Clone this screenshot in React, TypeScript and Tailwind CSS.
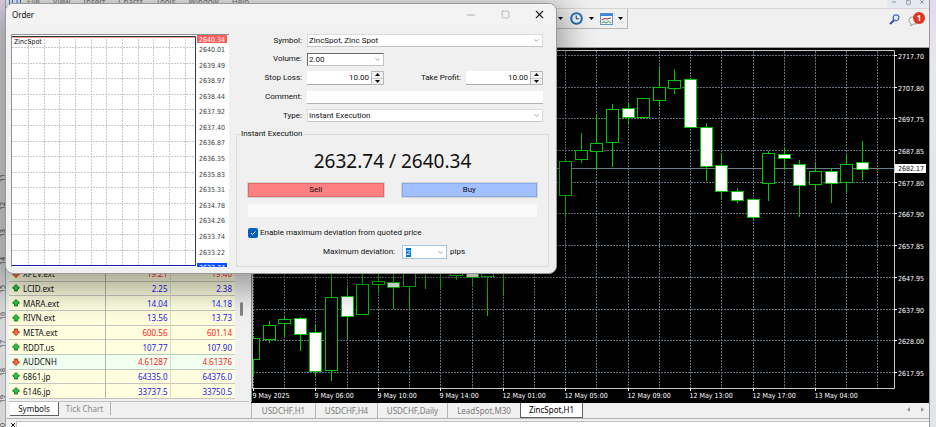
import React, { useState } from 'react';
import { ChevronDown, Minus, Square, X } from 'lucide-react';

type Quote = { symbol: string; bid: string; ask: string; up: boolean; alt?: boolean };

const quotes: Quote[] = [
  { symbol: 'XPEV.ext', bid: '19.21', ask: '19.40', up: false },
  { symbol: 'LCID.ext', bid: '2.25', ask: '2.38', up: true },
  { symbol: 'MARA.ext', bid: '14.04', ask: '14.18', up: true },
  { symbol: 'RIVN.ext', bid: '13.56', ask: '13.73', up: true },
  { symbol: 'META.ext', bid: '600.56', ask: '601.14', up: false },
  { symbol: 'RDDT.us', bid: '107.77', ask: '107.90', up: true },
  { symbol: 'AUDCNH', bid: '4.61287', ask: '4.61376', up: false, alt: true },
  { symbol: '6861.jp', bid: '64335.0', ask: '64376.0', up: true },
  { symbol: '6146.jp', bid: '33737.5', ask: '33750.5', up: true },
];

// [slot, high, body top, body bottom, low, bearish]
const candles: [number, number, number, number, number, boolean][] = [
  [0, 288, 290, 311, 328, false],
  [1, 273, 277, 291, 295, false],
  [2, 268, 271, 275, 289, false],
  [3, 269, 270, 286, 303, true],
  [4, 276, 284, 323, 328, true],
  [5, 220, 249, 322, 333, false],
  [6, 239, 248, 268, 291, true],
  [7, 220, 236, 266, 267, false],
  [8, 220, 233, 236, 245, false],
  [9, 220, 234, 239, 261, true],
  [10, 205, 212, 238, 261, false],
  [11, 200, 208, 220, 241, false],
  [12, 196, 204, 216, 240, false],
  [13, 200, 206, 227, 232, false],
  [14, 200, 206, 229, 239, true],
  [15, 200, 210, 228, 268, false],
  [16, 190, 198, 214, 248, false],
  [17, 176, 184, 198, 208, false],
  [18, 164, 170, 184, 196, false],
  [19, 140, 146, 170, 180, false],
  [20, 111, 113, 147, 168, false],
  [21, 85, 102, 111, 115, false],
  [22, 67, 95, 103, 122, false],
  [23, 56, 61, 94, 119, false],
  [24, 55, 60, 69, 76, true],
  [25, 50, 50, 69, 71, false],
  [26, 19, 39, 52, 58, false],
  [27, 21, 32, 40, 46, false],
  [28, 30, 31, 79, 79, true],
  [29, 75, 79, 118, 133, true],
  [30, 105, 117, 143, 151, true],
  [31, 140, 143, 152, 155, true],
  [32, 151, 151, 169, 171, true],
  [33, 103, 105, 135, 153, false],
  [34, 99, 106, 110, 122, true],
  [35, 112, 116, 137, 169, true],
  [36, 115, 123, 136, 142, false],
  [37, 120, 123, 135, 155, true],
  [38, 107, 116, 134, 144, false],
  [39, 93, 114, 121, 132, true],
];

const prices = ['2717.70', '2707.80', '2697.75', '2687.85', '2677.80', '2667.90', '2657.85', '2647.95', '2637.90', '2628.00', '2617.95'];
const times = ['9 May 2025', '9 May 06:00', '9 May 10:00', '9 May 14:00', '12 May 01:00', '12 May 05:00', '12 May 09:00', '12 May 13:00', '12 May 17:00', '13 May 04:00'];
const tickPrices = ['2640.01', '2639.49', '2638.97', '2638.44', '2637.92', '2637.40', '2636.87', '2636.35', '2635.83', '2635.31', '2634.78', '2634.26', '2633.74', '2633.22'];

const range = (n: number) => Array.from({ length: n }, (_, i) => i);

function PriceChart() {
  const gridX = (i: number) => Math.round(2 + i * 31.22) + 0.5;
  const gridY = (i: number) => Math.round(7 + i * 31.69) + 0.5;

  return (
    <svg className="block h-full w-full bg-black font-['DejaVu_Sans_Condensed','Noto_Sans',sans-serif] text-[7px]" role="img" aria-label="ZincSpot H1 chart">
      <g stroke="#66727f" strokeDasharray="2 1" shapeRendering="crispEdges">
        {range(21).map((i) => <line key={i} x1={gridX(i)} x2={gridX(i)} y1="3" y2="340" />)}
        {range(11).map((i) => <line key={i} x1="2" x2="643" y1={gridY(i)} y2={gridY(i)} />)}
      </g>
      <path d="M0 120.5H643" stroke="#6d7a88" />
      <g stroke="#00c800" shapeRendering="crispEdges">
        {candles.map(([slot, high, top, bottom, low, bearish]) => {
          const x = Math.round(2 + slot * 15.61);
          return (
            <g key={slot}>
              <line x1={x + 0.5} x2={x + 0.5} y1={high} y2={low} />
              <rect x={x - 5.5} y={top + 0.5} width="12" height={Math.max(bottom - top, 1)} fill={bearish ? '#fff' : '#000'} />
            </g>
          );
        })}
      </g>
      <rect x="0" y="0" width="1" height="354" fill="#8a8a8a" />
      <path d="M1.5 2.5H643.5V340.5H1.5Z" fill="none" stroke="#c8c8c8" />
      <g fill="#fff">
        {prices.map((p, i) => (
          <g key={p}>
            <rect x="643" y={gridY(i) - 0.5} width="3" height="1" />
            <text x="647" y={gridY(i) + 3}>{p}</text>
          </g>
        ))}
        {times.map((t, i) => (
          <g key={t}>
            <rect x={gridX(i * 2) - 0.5} y="340" width="1" height="3" />
            <text x={gridX(i * 2) - 1} y="350">{t}</text>
          </g>
        ))}
      </g>
      <rect x="644" y="116" width="31" height="9" fill="#fff" />
      <text x="647" y="123" fill="#111">2682.17</text>
    </svg>
  );
}

function TickChart() {
  return (
    <svg className="block h-[233px] w-[218px] shrink-0 bg-white font-['DejaVu_Sans_Condensed','Noto_Sans',sans-serif] text-[7px]" role="img" aria-label="ZincSpot tick chart">
      <g stroke="#c9c9c9" strokeDasharray="2 1" shapeRendering="crispEdges">
        {range(11).map((i) => {
          const x = Math.round(17 + i * 15.67) + 0.5;
          return <line key={i} x1={x} x2={x} y1="2" y2="231" />;
        })}
        {tickPrices.map((p, i) => {
          const y = Math.round(13 + i * 15.6) + 0.5;
          return <line key={p} x1="1" x2="185" y1={y} y2={y} />;
        })}
      </g>
      <path d="M1 3.5H185" stroke="#ff9c9c" />
      <path d="M0.5 233V0.5H218" fill="none" stroke="#8e9494" />
      <path d="M1 2.5H184.5V232" fill="none" stroke="#333b3b" />
      <path d="M1 231.5H185" stroke="#1a1ab4" />
      <text x="3" y="10" fill="#111">ZincSpot</text>
      <g fill="#3a3f42">
        {tickPrices.map((p, i) => <text key={p} x="188" y={Math.round(18 + i * 15.58)}>{p}</text>)}
      </g>
      <rect x="186" y="1" width="30" height="8" fill="#ff5a5a" />
      <text x="188" y="8" fill="#fff">2640.34</text>
      <rect x="186" y="229" width="30" height="4" fill="#0a50ff" />
      <text x="188" y="236" fill="#fff">2632.74</text>
    </svg>
  );
}

function Dropdown({ id, value, className = '', dark = false }: { id: string; value: string; className?: string; dark?: boolean }) {
  return (
    <div className={`relative h-[13px] ${className}`}>
      <select
        id={id}
        defaultValue={value}
        className={`block h-full w-full appearance-none border bg-white px-px outline-none ${dark ? 'border-[#c4c4c4] border-l-[#6a6a6a] border-t-[#6a6a6a]' : 'border-[#dcdcdc] border-b-[#c8c8c8]'}`}
      >
        <option>{value}</option>
      </select>
      <ChevronDown className="pointer-events-none absolute right-[3px] top-[3px] size-[7px] text-[#666]" />
    </div>
  );
}

function Spinner({ id, value }: { id: string; value: string }) {
  return (
    <div className="flex h-[14px] w-[77px]">
      <input id={id} defaultValue={value} className="w-0 flex-1 border-b border-[#a8a8a8] bg-white pr-0.5 text-right outline-none" />
      <div className="flex w-[13px] flex-col border border-[#b8b8b8] bg-[#f3f3f3]">
        <button type="button" aria-label="Increase" className="flex flex-1 items-center justify-center border-b border-[#c8c8c8]">
          <svg width="5" height="3" viewBox="0 0 5 3"><path d="M2.5 0L5 3H0Z" /></svg>
        </button>
        <button type="button" aria-label="Decrease" className="flex flex-1 items-center justify-center">
          <svg width="5" height="3" viewBox="0 0 5 3"><path d="M0 0H5L2.5 3Z" /></svg>
        </button>
      </div>
    </div>
  );
}

function Label({ htmlFor, children }: { htmlFor: string; children: React.ReactNode }) {
  return <label htmlFor={htmlFor} className="mr-[5px] w-[66px] shrink-0 text-right">{children}</label>;
}

function OrderDialog() {
  const [deviation, setDeviation] = useState(true);

  return (
    <div
      role="dialog"
      aria-label="Order"
      className="absolute left-[5px] top-[3px] w-[552px] overflow-hidden rounded-lg border border-[#9a9a9a] bg-[#f0f0f0] pb-1.5 shadow-[0_8px_32px_8px_rgba(0,0,0,0.35)]"
    >
      <div className="flex h-[21px] items-center bg-[#f3f3f3] pl-1.5">
        <h1 className="flex-1 text-[8px]">Order</h1>
        <button type="button" aria-label="Minimize" className="flex w-[34px] justify-center text-[#999]"><Minus className="size-[12px]" strokeWidth={1.5} /></button>
        <button type="button" aria-label="Maximize" className="flex w-[34px] justify-center text-[#aaa]"><Square className="size-[9px]" /></button>
        <button type="button" aria-label="Close" className="flex w-[34px] justify-center text-[#222]"><X className="size-[13px]" strokeWidth={2} /></button>
      </div>

      <div className="flex gap-[7px] pl-[5px] pr-[7px] pt-[9px] font-[Roboto,sans-serif]">
        <TickChart />
        <form className="flex-1" onSubmit={(e) => e.preventDefault()}>
          <div className="flex h-[88px] flex-col justify-between pr-1.5">
            <div className="flex items-center">
              <Label htmlFor="symbol">Symbol:</Label>
              <Dropdown id="symbol" value="ZincSpot, Zinc Spot" className="flex-1" />
            </div>
            <div className="flex items-center">
              <Label htmlFor="volume">Volume:</Label>
              <Dropdown id="volume" value="2.00" className="w-[77px]" dark />
            </div>
            <div className="flex items-center">
              <Label htmlFor="stop-loss">Stop Loss:</Label>
              <Spinner id="stop-loss" value="10.00" />
              <label htmlFor="take-profit" className="ml-auto mr-[5px]">Take Profit:</label>
              <Spinner id="take-profit" value="10.00" />
            </div>
            <div className="flex items-center">
              <Label htmlFor="comment">Comment:</Label>
              <input id="comment" className="h-[13px] w-0 flex-1 border-b border-[#b0b0b0] bg-white px-1 outline-none" />
            </div>
            <div className="flex items-center">
              <Label htmlFor="type">Type:</Label>
              <Dropdown id="type" value="Instant Execution" className="flex-1" />
            </div>
          </div>

          <fieldset className="mt-1.5 h-[139px] border border-[#dcdcdc] px-[11px]">
            <legend className="-ml-2 px-px leading-[12px]">Instant Execution</legend>
            <p className="mt-[9px] text-center font-['Noto_Sans',sans-serif] text-[19px] leading-6">2632.74 / 2640.34</p>
            <div className="mt-[10px] flex gap-[18px]">
              <button type="button" className="h-[14px] flex-1 border border-[#e06868] bg-[#ff8080] outline-1 outline-[#d4d4d4]">Sell</button>
              <button type="button" className="h-[14px] flex-1 border border-[#86a6ea] bg-[#a0c0ff] outline-1 outline-[#d4d4d4]">Buy</button>
            </div>
            <div className="mt-[7px] h-[13px] bg-[#f9f9f9]" />
            <label className="mt-[10px] flex items-center gap-0.5">
              <input type="checkbox" checked={deviation} onChange={(e) => setDeviation(e.target.checked)} className="peer sr-only" />
              <span className="flex size-[10px] items-center justify-center rounded-xs bg-[#005fb8]">
                {deviation && <svg width="6" height="6" viewBox="0 0 6 6" fill="none" stroke="#fff"><path d="M1 3L2.5 4.5L5.5 1.5" /></svg>}
              </span>
              Enable maximum deviation from quoted price
            </label>
            <div className="mt-1.5 flex items-center">
              <label htmlFor="max-deviation" className="mr-[7px] w-[147px] text-right">Maximum deviation:</label>
              <div className="relative h-[14px] w-[45px]">
                <input
                  id="max-deviation"
                  defaultValue="2"
                  autoFocus
                  onFocus={(e) => e.target.select()}
                  className="block h-full w-full border border-[#a8c4e4] bg-white px-[3px] outline-none selection:bg-[#0078d7] selection:text-white"
                />
                <ChevronDown className="pointer-events-none absolute right-[3px] top-[4px] size-[7px] text-[#555]" />
              </div>
              <span className="ml-[3px]">pips</span>
            </div>
          </fieldset>
        </form>
      </div>
    </div>
  );
}

function Arrow({ up }: { up: boolean }) {
  return (
    <svg width="8" height="8" viewBox="0 0 8 8" className="shrink-0">
      {up
        ? <path d="M4 0.5L7.5 4L5.5 5V7H2.5V5L0.5 4Z" fill="#30c040" stroke="#17802a" />
        : <path d="M4 7.5L0.5 4L2.5 3V1H5.5V3L7.5 4Z" fill="#f06a3c" stroke="#b53c18" />}
    </svg>
  );
}

function MarketWatch() {
  return (
    <section className="flex w-[243px] shrink-0 flex-col pl-[3px]">
      <div className="flex flex-1 items-end overflow-hidden pb-0.5">
        <table className="h-[132px] w-[226px] table-fixed border-collapse bg-[#ffffe0]">
          <tbody>
            {quotes.map((q) => (
              <tr key={q.symbol} className={`border-b border-[#c6c6c0] ${q.alt ? 'bg-[#f0fff0]' : ''}`}>
                <td className="w-[96px] border-r border-[#b4b4b0] p-0 pl-[3px]">
                  <span className="flex items-center gap-[3px] leading-[13px]"><Arrow up={q.up} />{q.symbol}</span>
                </td>
                <td className={`border-r border-[#dcdcc8] p-0 pr-0.5 text-right leading-[13px] ${q.up ? 'text-[#2020f0]' : 'text-[#ff2020]'}`}>{q.bid}</td>
                <td className={`p-0 pr-[3px] text-right leading-[13px] ${q.up ? 'text-[#2020f0]' : 'text-[#ff2020]'}`}>{q.ask}</td>
              </tr>
            ))}
          </tbody>
        </table>
        <div className="flex h-[132px] w-[12px] justify-center pt-[35px]">
          <div className="h-[14px] w-[3px] rounded-full bg-[#858585]" />
        </div>
      </div>
      <div className="flex h-[17px] items-start border-t border-[#c0c0c0]">
        <button type="button" className="ml-px h-[14px] w-[49px] border-b border-r border-[#606060] bg-white">Symbols</button>
        <button type="button" className="h-[13px] w-[52px] border-r border-[#b0b0b0] text-[#888]">Tick Chart</button>
      </div>
    </section>
  );
}

function ChartTabs() {
  return (
    <nav className="flex h-[15px] items-start bg-[#f0f0f0] text-[#7a7a7a]">
      <button type="button" className="h-[15px] w-[65px] border-x border-[#b4b4b4]">USDCHF,H1</button>
      <button type="button" className="h-[15px] w-[62px] border-r border-[#b4b4b4]">USDCHF,H4</button>
      <button type="button" className="h-[15px] w-[70px] border-r border-[#b4b4b4]">USDCHF,Daily</button>
      <button type="button" className="h-[15px] w-[72px]">LeadSpot,M30</button>
      <button type="button" className="h-[15px] w-[63px] border-x border-b border-[#606060] bg-white text-black">ZincSpot,H1</button>
      <span className="ml-auto mr-1 flex h-[13px] items-center gap-[10px]">
        <button type="button" aria-label="Scroll left"><svg width="4" height="5" viewBox="0 0 4 5" fill="#999"><path d="M3 0V5L0 2.5Z" /></svg></button>
        <button type="button" aria-label="Scroll right"><svg width="4" height="5" viewBox="0 0 4 5" fill="#999"><path d="M0 0V5L3 2.5Z" /></svg></button>
      </span>
    </nav>
  );
}

function Caret() {
  return <svg width="5" height="3" viewBox="0 0 5 3"><path d="M0 0H5L2.5 3Z" /></svg>;
}

function Toolbar() {
  return (
    <div className="flex h-[39px] items-start justify-between border-b border-[#a0a0a0]">
      <div className="flex h-[20px] w-[622px] items-center justify-end border-b border-r border-[#b8b8b8] pr-1">
        <Caret />
        <button type="button" aria-label="Periods" className="ml-[7px] flex items-center gap-[6px]">
          <svg width="13" height="13" viewBox="0 0 13 13">
            <circle cx="6.5" cy="6.5" r="6.2" fill="#1858a8" />
            <circle cx="6.5" cy="6.5" r="5" fill="#58a8ec" />
            <circle cx="6.5" cy="6.5" r="3.9" fill="#eef6fc" />
            <path d="M6.2 3.5V6.8H8.8" fill="none" stroke="#234" />
          </svg>
          <Caret />
        </button>
        <button type="button" aria-label="Templates" className="ml-[6px] flex items-center gap-[5px]">
          <svg width="13" height="12" viewBox="0 0 13 12">
            <rect x="0.5" y="0.5" width="12" height="11" fill="#f6fafc" stroke="#6a94bc" />
            <rect x="0.5" y="0.5" width="12" height="2.5" fill="#3c88d8" />
            <path d="M2 6.5L5 5.5L7 6L11 5" fill="none" stroke="#a03030" />
            <path d="M1 7.5H12" stroke="#b8c8d4" strokeWidth="0.5" />
            <path d="M2 10L4 8.7L6 10L8.5 8.5L11 10" fill="none" stroke="#3c9048" />
          </svg>
          <Caret />
        </button>
      </div>
      <div className="flex h-[20px] items-center gap-2 pr-1">
        <button type="button" aria-label="Search">
          <svg width="11" height="11" viewBox="0 0 11 11" fill="none">
            <path d="M5 6.2L1 10" stroke="#3450a8" strokeWidth="2" />
            <circle cx="7" cy="3.8" r="2.9" fill="#e4eefc" stroke="#4468c4" strokeWidth="1.3" />
          </svg>
        </button>
        <button type="button" aria-label="Notifications">
          <svg width="17" height="16" viewBox="0 0 17 16">
            <path d="M5 6C2 6 1 7.500 1 9.500C1 11 2 12 3 12.500L3 15L5.500 13H7C9 13 10 12 10 10" fill="#f4f4f4" stroke="#999" />
            <circle cx="11" cy="7" r="6" fill="#de3420" />
            <text x="11" y="10" textAnchor="middle" fill="#fff" className="text-[8px] font-bold">1</text>
          </svg>
        </button>
      </div>
    </div>
  );
}

function MenuBar() {
  return (
    <header className="-mt-1 flex h-[13px] items-start border-b border-[#d4d4d4] text-[#777]">
      <svg width="12" height="12" viewBox="0 0 12 12" className="ml-[3px] mr-1.5">
        <rect x="0.5" y="0.5" width="11" height="10" fill="#e8f0fa" stroke="#3478c8" />
        <path d="M3.500 4V8M8 4V7" stroke="#3478c8" />
      </svg>
      <nav className="flex gap-[13px] leading-[12px]">
        {['File', 'View', 'Insert', 'Charts', 'Tools', 'Window', 'Help'].map((m) => <button key={m} type="button">{m}</button>)}
      </nav>
      <div className="ml-auto flex h-[12px] items-center bg-[#e4eaf0] text-[#778]">
        <button type="button" aria-label="Minimize chart" className="flex w-[14px] justify-center"><Minus className="size-[6px]" strokeWidth={3} /></button>
        <button type="button" aria-label="Restore chart" className="flex w-[14px] justify-center"><Square className="size-[5px]" strokeWidth={3} /></button>
        <button type="button" aria-label="Close chart" className="flex w-[14px] justify-center"><X className="size-[6px]" strokeWidth={3} /></button>
      </div>
    </header>
  );
}

function Ruler() {
  return (
    <div className="-mb-1 flex w-[6px] shrink-0 flex-col justify-between border-r border-[#a8a8a8] bg-linear-to-b from-[#e2d8f0] via-[#d8dadd] via-15% to-[#d4d6d8] pt-[173px] text-[7px] text-[#444]">
      {range(10).map((i) => (
        <span key={i} className="h-[9px] w-[5px] rotate-180 leading-[5px] [writing-mode:vertical-rl]">{i + 11}</span>
      ))}
    </div>
  );
}

function App() {
  return (
    <div className="relative flex h-screen overflow-hidden bg-[#f0f0f0] font-['Noto_Sans',sans-serif] text-[8px] leading-[12px] text-[#111]">
      <Ruler />
      <main className="flex min-w-0 flex-1 flex-col border-r border-[#999]">
        <MenuBar />
        <Toolbar />
        <div className="flex min-h-0 flex-1 gap-0.5">
          <MarketWatch />
          <div className="flex min-w-0 flex-1 flex-col">
            <div className="min-h-0 flex-1"><PriceChart /></div>
            <ChartTabs />
          </div>
        </div>
        <footer className="flex h-[9px] shrink-0 border-t border-[#b0b0b0]">
          <button type="button" aria-label="Close terminal" className="ml-[3px] flex w-[7px] justify-center pt-[3px]"><X className="size-[6px]" strokeWidth={4} /></button>
          <div className="mt-0.5 flex-1 overflow-hidden border-l border-t border-[#c0c0c0] bg-white" />
        </footer>
      </main>
      <aside className="w-[6px] shrink-0 bg-linear-to-b from-[#e4d8f4] via-[#e6e7ea] via-15% to-[#e2e4e7]" />
      <OrderDialog />
    </div>
  );
}

export default App;
